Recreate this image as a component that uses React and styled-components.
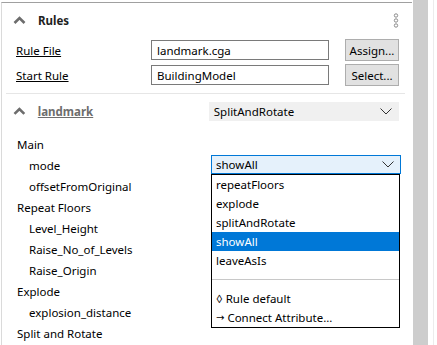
import React from 'react';
import styled, { createGlobalStyle } from 'styled-components';

const GlobalStyle = createGlobalStyle`
  html, body {
    margin: 0;
    padding: 0;
    background: #ffffff;
    overflow: hidden;
  }
  body {
    font-family: 'Noto Sans', 'Open Sans', sans-serif;
    font-size: 11.5px;
    color: #000;
  }
`;

const Window = styled.div`
  display: flex;
  width: 437px;
  height: 345px;
  overflow: hidden;
`;

const Panel = styled.div`
  position: relative;
  width: 411px;
  margin-top: 2px;
  margin-left: 1px;
  border-top: 1px solid #a0a0a0;
  border-left: 1px solid #dadada;
  box-sizing: border-box;
`;

const Scrollbar = styled.div`
  width: 15px;
  margin-left: 1px;
  background: #cdcdcd;
`;

const Edge = styled.div`
  width: 1px;
  margin-left: 5px;
  background: #ececec;
`;

const SectionHeader = styled.div`
  display: flex;
  align-items: center;
  height: ${p => p.$h}px;
  padding-left: 11px;
  padding-right: 13px;
`;

const Caret = () => (
  <svg width="13" height="8" viewBox="0 0 13 8">
    <polyline points="1.5,7 6.5,2 11.5,7" fill="none" stroke="#6d6d6d" strokeWidth="2.6" />
  </svg>
);

const Chevron = () => (
  <svg width="12" height="7" viewBox="0 0 12 7">
    <polyline points="0.5,0.5 6,6 11.5,0.5" fill="none" stroke="#333" strokeWidth="1" />
  </svg>
);

const Kebab = () => (
  <svg width="6" height="15" viewBox="0 0 6 15">
    <circle cx="3" cy="2.5" r="1.7" fill="none" stroke="#8a8a8a" strokeWidth="1" />
    <circle cx="3" cy="7.5" r="1.7" fill="none" stroke="#8a8a8a" strokeWidth="1" />
    <circle cx="3" cy="12.5" r="1.7" fill="none" stroke="#8a8a8a" strokeWidth="1" />
  </svg>
);

const HeaderTitle = styled.span`
  margin-left: 12px;
  font-weight: bold;
  color: ${p => (p.$muted ? '#6d6d6d' : '#1e1e1e')};
  text-decoration: ${p => (p.$link ? 'underline' : 'none')};
  width: ${p => (p.$w ? `${p.$w}px` : 'auto')};
  flex: ${p => (p.$w ? 'none' : '1')};
`;

const FieldGrid = styled.div`
  display: grid;
  grid-template-columns: 135px 178px 16px 54px;
  grid-auto-rows: 22px;
  row-gap: 3px;
  padding-left: 14px;
  margin-top: 2px;
  align-items: center;
`;

const LinkLabel = styled.span`
  text-decoration: underline;
  color: #000;
`;

const TextBox = styled.div`
  grid-column: 2;
  height: 20px;
  box-sizing: border-box;
  border: 1px solid #7a7a7a;
  padding-left: 5px;
  display: flex;
  align-items: center;
`;

const Button = styled.div`
  grid-column: 4;
  height: 22px;
  box-sizing: border-box;
  border: 1px solid #adadad;
  background: #e1e1e1;
  display: flex;
  align-items: center;
  justify-content: center;
`;

const Separator = styled.div`
  height: 1px;
  margin: 7px 7px 0 4px;
  background: #e6e6e6;
`;

const Combo = styled.div`
  display: flex;
  align-items: center;
  justify-content: space-between;
  width: ${p => p.$w}px;
  height: 19px;
  box-sizing: border-box;
  padding: 0 6px 0 4px;
  background: ${p => (p.$focused ? '#e5f1fb' : '#f0f0f0')};
  border: 1px solid ${p => (p.$focused ? '#0078d7' : '#f0f0f0')};
`;

const AttrList = styled.div`
  display: grid;
  grid-template-columns: 209px 190px;
  grid-auto-rows: 21px;
  margin-top: 6px;
`;

const AttrLabel = styled.div`
  grid-column: 1;
  display: flex;
  align-items: center;
  padding-left: ${p => (p.$indent ? 27 : 15)}px;
`;

const AttrValue = styled.div`
  grid-column: 2;
  display: flex;
  align-items: flex-start;
`;

const GhostField = styled.div`
  width: 190px;
  height: 21px;
  margin-top: 10px;
  border-top: 1px solid #e3e3e3;
`;

const Popup = styled.div`
  position: absolute;
  left: 209px;
  top: 171px;
  width: 189px;
  box-sizing: border-box;
  border: 1px solid #000;
  background: #fff;
`;

const Item = styled.div`
  height: 19px;
  display: flex;
  align-items: center;
  padding-left: 4px;
  background: ${p => (p.$selected ? '#0078d7' : 'transparent')};
  color: ${p => (p.$selected ? '#fff' : '#000')};
`;

const PopupSeparator = styled.div`
  height: 1px;
  margin: 9px 0;
  background: #c8c8c8;
`;

const Arrow = styled.span`
  font-family: 'DejaVu Sans', sans-serif;
  font-size: 10px;
  margin-right: 3px;
`;

const options = ['repeatFloors', 'explode', 'splitAndRotate', 'showAll', 'leaveAsIs'];

const attrs = [
  { label: 'Main' },
  { label: 'mode', indent: true, value: 'showAll' },
  { label: 'offsetFromOriginal', indent: true },
  { label: 'Repeat Floors' },
  { label: 'Level_Height', indent: true },
  { label: 'Raise_No_of_Levels', indent: true },
  { label: 'Raise_Origin', indent: true },
  { label: 'Explode' },
  { label: 'explosion_distance', indent: true },
  { label: 'Split and Rotate' },
];

export default function App() {
  return (
    <Window>
      <GlobalStyle />
      <Panel>
        <SectionHeader $h={34}>
          <Caret />
          <HeaderTitle>Rules</HeaderTitle>
          <Kebab />
        </SectionHeader>
        <FieldGrid>
          <LinkLabel>Rule File</LinkLabel>
          <TextBox>landmark.cga</TextBox>
          <Button>Assign...</Button>
          <LinkLabel>Start Rule</LinkLabel>
          <TextBox>BuildingModel</TextBox>
          <Button>Select...</Button>
        </FieldGrid>
        <Separator />
        <SectionHeader $h={34}>
          <Caret />
          <HeaderTitle $muted $link $w={171}>landmark</HeaderTitle>
          <Combo $w={193}>
            <span>SplitAndRotate</span>
            <Chevron />
          </Combo>
        </SectionHeader>
        <AttrList>
          {attrs.map(a => (
            <React.Fragment key={a.label}>
              <AttrLabel $indent={a.indent}>{a.label}</AttrLabel>
              <AttrValue>
                {a.value && (
                  <Combo $w={190} $focused>
                    <span>{a.value}</span>
                    <Chevron />
                  </Combo>
                )}
              </AttrValue>
            </React.Fragment>
          ))}
          <AttrLabel />
          <AttrValue>
            <GhostField />
          </AttrValue>
        </AttrList>
        <Popup>
          {options.map(o => (
            <Item key={o} $selected={o === 'showAll'}>{o}</Item>
          ))}
          <PopupSeparator />
          <Item>◊ Rule default</Item>
          <Item><Arrow>→</Arrow>Connect Attribute...</Item>
        </Popup>
      </Panel>
      <Scrollbar />
      <Edge />
    </Window>
  );
}
